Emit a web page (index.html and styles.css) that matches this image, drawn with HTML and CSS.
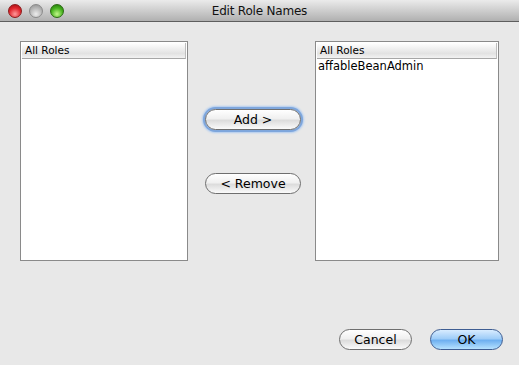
FILE: index.html
```html
<!DOCTYPE html>
<html lang="en">
<head>
    <meta charset="UTF-8">
    <title>Edit Role Names</title>
    <link rel="stylesheet" href="styles.css">
</head>
<body>
    <div class="window">
        <div class="titlebar">
            <div class="lights">
                <span class="light close"></span>
                <span class="light mini"></span>
                <span class="light zoom"></span>
            </div>
            <div class="title">Edit Role Names</div>
        </div>
        <div class="content">
            <div class="lists">
                <div class="list list-left">
                    <div class="list-header">All Roles</div>
                </div>
                <div class="actions">
                    <button type="button" class="btn btn-focus">Add &gt;</button>
                    <button type="button" class="btn">&lt; Remove</button>
                </div>
                <div class="list list-right">
                    <div class="list-header">All Roles</div>
                    <div class="list-item">affableBeanAdmin</div>
                </div>
            </div>
            <div class="footer">
                <button type="button" class="btn btn-small">Cancel</button>
                <button type="button" class="btn btn-small btn-default">OK</button>
            </div>
        </div>
    </div>
</body>
</html>
```

FILE: styles.css
```css
:root {
    --window-bg: #e8e8e8;
    --border-color: #8a8a8a;
    --text-color: #000;
}
body {
    margin: 0;
    font-family: "DejaVu Sans", "Liberation Sans", sans-serif;
    color: var(--text-color);
    background-color: var(--window-bg);
}
.window {
    width: 519px;
    height: 365px;
    display: flex;
    flex-direction: column;
    background-color: var(--window-bg);
}
.titlebar {
    height: 21px;
    border-bottom: 1px solid #5e5e5e;
    background: linear-gradient(#ebebeb, #b0b0b0);
    position: relative;
    display: flex;
    align-items: center;
    justify-content: center;
}
.lights {
    position: absolute;
    left: 8px;
    top: 4px;
    display: flex;
    gap: 7px;
}
.light {
    width: 14px;
    height: 14px;
    border-radius: 50%;
    box-sizing: border-box;
}
.close {
    background: radial-gradient(circle at 50% 75%, #ff9a9a 0%, #e0262c 55%, #9c0c10 100%);
    border: 1px solid #8c1a1a;
}
.mini {
    background: radial-gradient(circle at 50% 75%, #ececec 0%, #b7b7b7 55%, #8d8d8d 100%);
    border: 1px solid #8a8a8a;
}
.zoom {
    background: radial-gradient(circle at 50% 75%, #c2f78a 0%, #46b21e 55%, #1f6e0a 100%);
    border: 1px solid #2b6a12;
}
.title {
    font-size: 12px;
    color: #111;
    letter-spacing: -0.2px;
}
.content {
    flex: 1;
    display: flex;
    flex-direction: column;
    padding: 19px 16px 15px 20px;
}
.lists {
    display: flex;
    align-items: flex-start;
}
.list {
    height: 220px;
    box-sizing: border-box;
    border: 1px solid var(--border-color);
    background-color: white;
    padding: 1px;
}
.list-left {
    width: 168px;
}
.list-right {
    width: 184px;
    margin-left: auto;
    margin-right: 4px;
}
.list-header {
    height: 15px;
    font-size: 10.5px;
    line-height: 15px;
    padding-left: 3px;
    border-right: 1px solid #bdbdbd;
    background: linear-gradient(#ffffff, #e2e2e2 70%, #f2f2f2);
    border-bottom: 1px solid #a6a6a6;
}
.list-item {
    font-size: 11.5px;
    line-height: 15px;
    padding-left: 1px;
}
.actions {
    display: flex;
    flex-direction: column;
    gap: 43px;
    margin-left: 17px;
    margin-top: 68px;
}
.btn {
    width: 96px;
    height: 21px;
    border: 1px solid #6e6e6e;
    border-radius: 11px;
    background: linear-gradient(#ffffff, #f0f0f0 45%, #dcdcdc 55%, #fafafa);
    font-family: "DejaVu Sans", "Liberation Sans", sans-serif;
    font-size: 12.5px;
    color: #000;
    padding: 0;
}
.btn-focus {
    box-shadow: 0 0 0 2px #7ea6dc, 0 0 2px 3px #aecbf0;
}
.footer {
    margin-top: auto;
    display: flex;
    justify-content: flex-end;
    gap: 18px;
}
.btn-small {
    width: 73px;
}
.btn-default {
    border-color: #3e5d92;
    background: linear-gradient(#d8ecff, #9fcdf8 45%, #6fb0f0 55%, #b6e2ff);
}
```
